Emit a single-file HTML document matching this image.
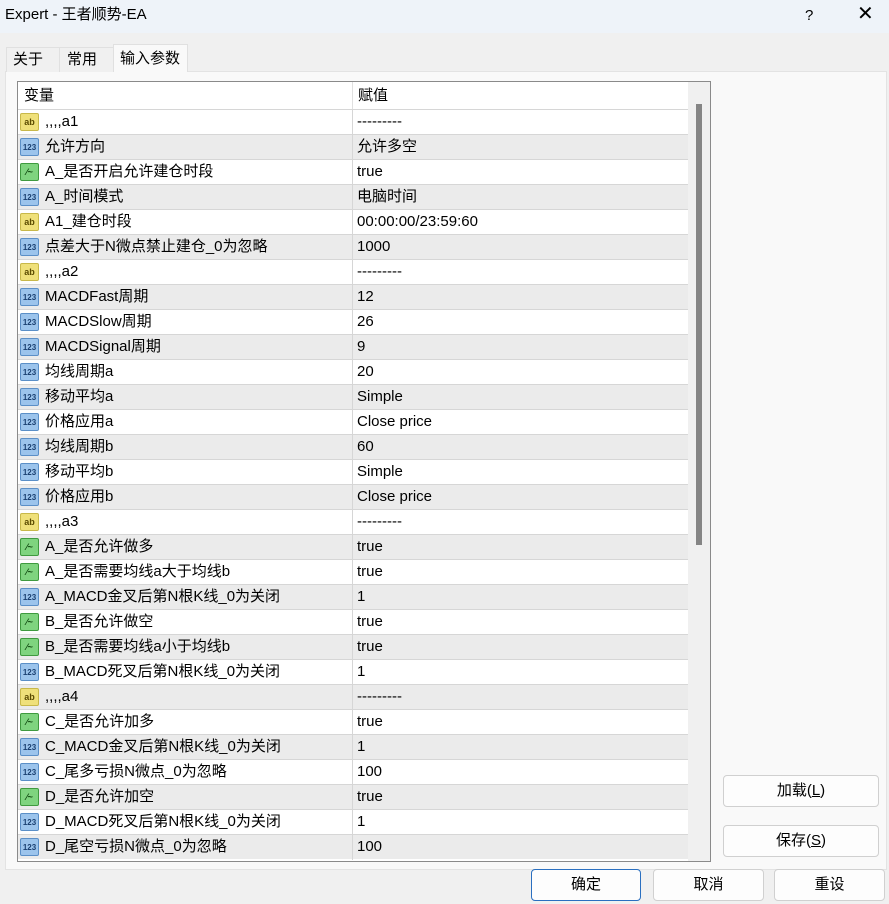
<!DOCTYPE html>
<html><head><meta charset="utf-8"><style>
*{box-sizing:border-box;margin:0;padding:0}
body{width:889px;height:904px;background:#f0f0f0;font-family:"Liberation Sans","Noto Sans CJK SC",sans-serif;font-size:15px;color:#000;position:relative;overflow:hidden}
.title{position:absolute;left:0;top:0;width:889px;height:33px;background:#eef3f9}
.title span{position:absolute;left:5px;top:6px;font-size:15px;line-height:18px}
.tab{position:absolute;top:47px;height:25px;border:1px solid #e0e0e0;border-bottom:none;background:#f0f0f0;font-size:15px;line-height:18px;padding:3px 0 0 6px}
.panel{position:absolute;left:5px;top:71px;width:882px;height:799px;background:#f9f9f9;border:1px solid #e3e3e3}
.list{position:absolute;left:17px;top:81px;width:694px;height:781px;border:1px solid #8a8a8a;background:#fff;overflow:hidden}
.hdr{position:absolute;left:0;top:0;width:671px;height:27px;background:#fff}
.hdr span{position:absolute;top:5px;line-height:18px}
.row{position:absolute;left:0;width:671px;height:25px;border-top:1px solid #d6d6d6}
.row.g{background:#ebebeb}
.row span{line-height:18px;height:18px}
.row .n{position:absolute;left:27px;top:3px;white-space:nowrap}
.row .v{position:absolute;left:339px;top:3px}
.row .d{position:absolute;left:334px;top:0;width:1px;height:25px;background:#d6d6d6}
.ic{position:absolute;left:2px;top:3px;width:19px;height:18px;border-radius:2px;font-size:9px;font-weight:bold;text-align:center;line-height:17px}
.ab{background:#efe07a;border:1px solid #c8b84a;color:#5a4a00}
.nm{background:#9cc4ec;border:1px solid #5b8fc7;color:#1a3f70;font-size:8px}
.bo{background:#7fd47f;border:1px solid #3f9a3f;color:#104a10}
.sb{position:absolute;left:670px;top:0;width:22px;height:779px;background:#f0f0f0}
.th{position:absolute;left:8px;top:22px;width:6px;height:441px;background:#858585}
.btn{position:absolute;height:32px;border:1px solid #d0d0d0;border-radius:4px;background:#fdfdfd;text-align:center;line-height:30px;font-size:15px}
</style></head><body>
<div class="title"><span>Expert - 王者顺势-EA</span><span style="left:805px;top:7px">?</span><span style="left:857px;top:5px;font-size:20px;font-weight:300">✕</span></div>
<div class="panel"></div>
<div class="tab" style="left:6px;width:54px">关于</div>
<div class="tab" style="left:59px;width:55px;padding-left:7px">常用</div>
<div class="tab" style="left:113px;top:44px;height:28px;width:75px;background:#f9f9f9;padding-top:5px">输入参数</div>
<div class="list">
<div class="hdr"><span style="left:6px">变量</span><span style="left:340px">赋值</span><div style="position:absolute;left:334px;top:0;width:1px;height:27px;background:#e0e0e0"></div></div>
<div id="rows"></div>
<div class="sb"><div class="th"></div></div>
</div>
<div class="btn" style="left:723px;top:775px;width:156px">加载(<u>L</u>)</div>
<div class="btn" style="left:723px;top:825px;width:156px">保存(<u>S</u>)</div>
<div class="btn" style="left:531px;top:869px;width:110px;border-color:#2a6fc0">确定</div>
<div class="btn" style="left:653px;top:869px;width:111px">取消</div>
<div class="btn" style="left:774px;top:869px;width:111px">重设</div>
<script>
var d=[["ab",",,,,a1","---------"],["nm","允许方向","允许多空"],["bo","A_是否开启允许建仓时段","true"],["nm","A_时间模式","电脑时间"],["ab","A1_建仓时段","00:00:00/23:59:60"],["nm","点差大于N微点禁止建仓_0为忽略","1000"],["ab",",,,,a2","---------"],["nm","MACDFast周期","12"],["nm","MACDSlow周期","26"],["nm","MACDSignal周期","9"],["nm","均线周期a","20"],["nm","移动平均a","Simple"],["nm","价格应用a","Close price"],["nm","均线周期b","60"],["nm","移动平均b","Simple"],["nm","价格应用b","Close price"],["ab",",,,,a3","---------"],["bo","A_是否允许做多","true"],["bo","A_是否需要均线a大于均线b","true"],["nm","A_MACD金叉后第N根K线_0为关闭","1"],["bo","B_是否允许做空","true"],["bo","B_是否需要均线a小于均线b","true"],["nm","B_MACD死叉后第N根K线_0为关闭","1"],["ab",",,,,a4","---------"],["bo","C_是否允许加多","true"],["nm","C_MACD金叉后第N根K线_0为关闭","1"],["nm","C_尾多亏损N微点_0为忽略","100"],["bo","D_是否允许加空","true"],["nm","D_MACD死叉后第N根K线_0为关闭","1"],["nm","D_尾空亏损N微点_0为忽略","100"]];
var h="";d.forEach(function(r,i){var t={ab:"ab",nm:"123",bo:"⁄~"}[r[0]];h+='<div class="row'+(i%2?' g':'')+'" style="top:'+(27+i*25)+'px"><div class="ic '+r[0]+'">'+t+'</div><span class="n">'+r[1]+'</span><div class="d"></div><span class="v">'+r[2]+'</span></div>';});
document.getElementById("rows").innerHTML=h;
</script>
</body></html>
